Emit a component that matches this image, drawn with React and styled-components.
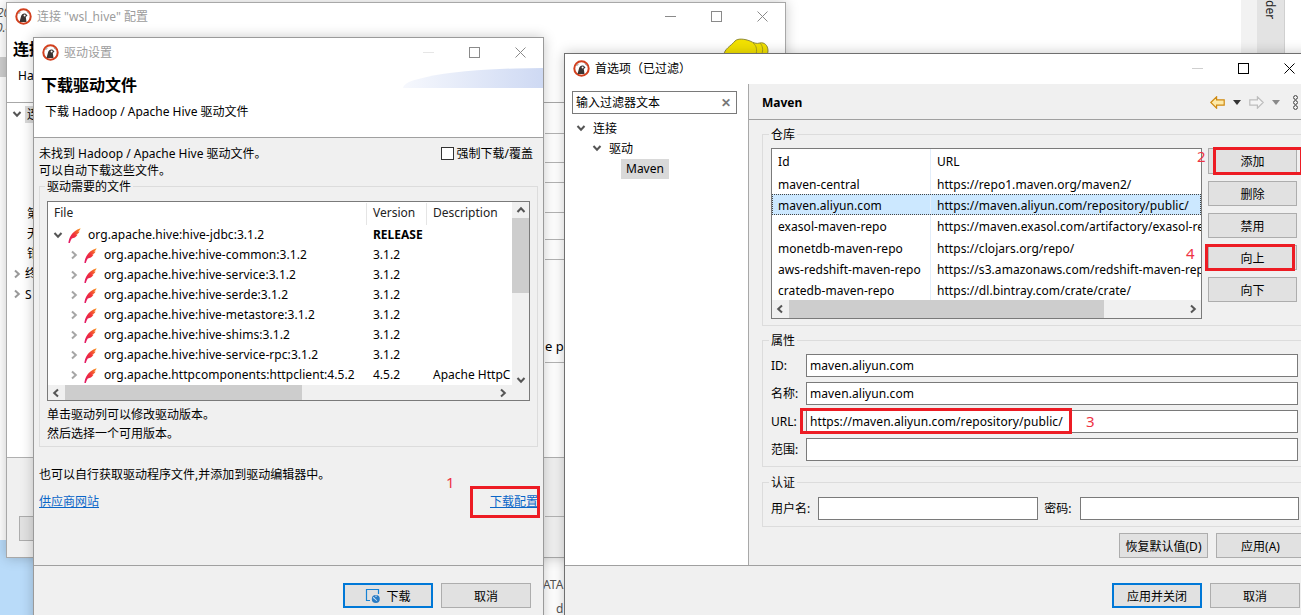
import React from "react";
import styled, { createGlobalStyle } from "styled-components";

const GlobalStyle = createGlobalStyle`
  html, body { margin: 0; padding: 0; background: #fff; overflow: hidden; }
  body { font: 12px/17px "Noto Sans", "Noto Sans CJK SC", sans-serif; color: #000; }
  * { box-sizing: border-box; }
`;

const CJK = `"Noto Sans", "Noto Sans CJK SC", sans-serif`;

/* ---------- drawings ---------- */
const Logo = () => (
  <svg width="17" height="17" viewBox="0 0 17 17">
    <circle cx="8.5" cy="8.5" r="7.2" fill="#fff" stroke="#d2401e" strokeWidth="2" />
    <path d="M4.5 14 L6 8.5 C6.5 6 9 5 11 6 L12.5 7.5 L10.8 9 L11.5 14 Z" fill="#3a3432" />
    <circle cx="9.6" cy="7.4" r="1" fill="#fff" />
    <path d="M3.5 6 L5.5 3.8 M12 3.5 L13.5 5.5" stroke="#8a8a8a" strokeWidth="1" />
  </svg>
);

const Feather = () => (
  <svg width="13" height="15" viewBox="0 0 13 15">
    <defs>
      <linearGradient id="fth" x1="0" y1="1" x2="1" y2="0">
        <stop offset="0" stopColor="#e0146a" />
        <stop offset="0.5" stopColor="#f0303c" />
        <stop offset="0.8" stopColor="#f56a2a" />
        <stop offset="1" stopColor="#f9a51f" />
      </linearGradient>
    </defs>
    <path
      d="M0.4 15 C1 10 3.2 3.2 12.6 0.2 C12.2 1.8 11.2 2.8 10 3.4 L11.6 3.4 C10.8 5.2 9.4 6 8 6.6 L9.6 6.8 C8 9.2 6 10.2 3.8 10.4 C2.8 11.8 2.2 13.2 1.8 15 Z"
      fill="url(#fth)"
    />
  </svg>
);

const WinGlyph = ({ kind, color }) => (
  <svg width="11" height="11" viewBox="0 0 11 11" fill="none" stroke={color} strokeWidth="1">
    {kind === "min" && <path d="M0 5.5H11" />}
    {kind === "max" && <rect x="0.5" y="0.5" width="10" height="10" />}
    {kind === "close" && <path d="M0.5 0.5L10.5 10.5M10.5 0.5L0.5 10.5" />}
  </svg>
);

const Chevron = ({ dir = "right", color = "#a6a6a6", size = 10 }) => {
  const d = {
    right: "M3 1.5L6.8 5L3 8.5",
    left: "M7 1.5L3.2 5L7 8.5",
    down: "M1.5 3L5 6.8L8.5 3",
    up: "M1.5 7L5 3.2L8.5 7",
  }[dir];
  return (
    <svg width={size} height={size} viewBox="0 0 10 10" fill="none" stroke={color} strokeWidth="2">
      <path d={d} />
    </svg>
  );
};

const GlobeMonitor = () => (
  <svg width="16" height="16" viewBox="0 0 16 16" fill="none">
    <path d="M5 12.5H1.5V1.5H13.5V6" stroke="#1682d4" strokeWidth="1.2" />
    <circle cx="10.8" cy="11" r="4" fill="#2b7cc4" />
    <path d="M8 9.5C10 10 10 12 12 12.5M11 7.5V9" stroke="#cfe6f8" strokeWidth="1.1" />
  </svg>
);

const NavArrow = ({ flip, fill, stroke }) => (
  <svg width="15" height="13" viewBox="0 0 15 13" style={flip ? { transform: "scaleX(-1)" } : undefined}>
    <path d="M0.8 6.5L6.6 0.8V3.8H14.2V9.2H6.6V12.2Z" fill={fill} stroke={stroke} strokeWidth="1.2" />
  </svg>
);

const Caret = styled.span`
  width: 0;
  height: 0;
  border-left: 4px solid transparent;
  border-right: 4px solid transparent;
  border-top: 5px solid ${(p) => p.$color};
`;

const Blob = () => (
  <svg width="46" height="20" viewBox="0 0 46 20">
    <path
      d="M1 17C1 11 8 8 12 3C15 0 22 1 27 3C31 5 33 6 37 5C41 4 45 7 45 13L44 20H2Z"
      fill="#f2e100"
      stroke="#8f8a3c"
      strokeWidth="1"
    />
    <path d="M30 5C34 8 34 12 33 17M37 5C40 8 40 12 39 16" stroke="#a8a020" fill="none" />
  </svg>
);

/* ---------- desktop ---------- */
const Desktop = styled.div`
  position: relative;
  width: 1301px;
  height: 615px;
  overflow: hidden;
  background: #fff;
`;

const BlueCorner = styled.div`
  position: absolute;
  left: 0;
  top: 540px;
  width: 34px;
  height: 75px;
  background: #b9dbf9;
`;

const GreyNub = styled.div`
  position: absolute;
  left: 0;
  top: 57px;
  width: 7px;
  height: 20px;
  background: #cfcfcf;
`;

const Scrap = styled.span`
  position: absolute;
  left: ${(p) => p.$x}px;
  top: ${(p) => p.$y}px;
  color: #555;
  font-style: ${(p) => (p.$italic ? "italic" : "normal")};
  white-space: nowrap;
`;

const SideTab = styled.div`
  position: absolute;
  left: 1241px;
  top: 0;
  width: 44px;
  height: 53px;
  display: flex;
  justify-content: flex-end;
  background: #f2f2f2;
`;

const SideTabInner = styled.div`
  width: 28px;
  background: #e3e3e3;
  border-right: 1px solid #d0d0d0;
  padding: 0 3px 0 0;
  writing-mode: vertical-rl;
  font-size: 12px;
  line-height: 22px;
  color: #222;
`;

const Window = styled.section`
  position: absolute;
  left: ${(p) => p.$x}px;
  top: ${(p) => p.$y}px;
  width: ${(p) => p.$w}px;
  height: ${(p) => p.$h}px;
  display: flex;
  flex-direction: column;
  background: #f0f0f0;
  border: 1px solid ${(p) => p.$edge || "#9a9a9a"};
  box-shadow: 0 0 12px rgba(0, 0, 0, 0.22);
`;

const TitleBar = styled.header`
  flex: none;
  height: ${(p) => p.$h}px;
  display: flex;
  align-items: center;
  padding: 0 0 ${(p) => p.$lift || 0}px 8px;
  background: #fff;
  color: ${(p) => (p.$dim ? "#9c9c9c" : "#000")};
  font-size: 12px;
`;

const TitleText = styled.span`
  margin-left: 5px;
  flex: 1;
  white-space: nowrap;
`;

const WinButton = styled.span`
  width: 46px;
  display: flex;
  justify-content: center;
`;

const Controls = ({ tone, minTone }) => (
  <>
    <WinButton><WinGlyph kind="min" color={minTone} /></WinButton>
    <WinButton><WinGlyph kind="max" color={tone} /></WinButton>
    <WinButton><WinGlyph kind="close" color={tone} /></WinButton>
  </>
);

/* ---------- back window ---------- */
const BackHead = styled.div`
  flex: none;
  height: 74px;
  display: flex;
  padding: 9px 16px 0 0;
  background: #fff;
  border-bottom: 1px solid #a8a8a8;
`;

const BackHeadText = styled.div`
  flex: 1;
  padding-left: 6px;
  margin-top: -3px;
`;

const BackHeading = styled.div`
  font-size: 16px;
  font-weight: 700;
  line-height: 28px;
`;

const BackSub = styled.div`
  padding: 4px 0 0 5px;
`;

const BackBody = styled.div`
  flex: 1;
  display: flex;
  background: #fff;
`;

const BackTree = styled.div`
  width: 538px;
  padding-top: 1px;
`;

const BackRow = styled.div`
  height: 20.2px;
  margin-bottom: ${(p) => p.$gap || 0}px;
  display: flex;
  align-items: center;
  padding-left: ${(p) => p.$pad}px;
  gap: 3px;
`;

const BackPick = styled.span`
  background: #d9d9d9;
  padding: 0 2px;
`;

const BackRight = styled.div`
  flex: 1;
  display: flex;
  flex-direction: column;
`;

const BackLine = styled.div`
  height: ${(p) => p.$h}px;
  border-bottom: 1px solid #b4b4b4;
  display: flex;
  align-items: flex-end;
  padding-bottom: 7px;
  font-size: 13px;
  white-space: nowrap;
`;

const BackFoot = styled.div`
  flex: none;
  height: 100px;
  display: flex;
  justify-content: space-between;
  background: #f0f0f0;
  border-top: 1px solid #b0b0b0;
  padding: 58px 0 0 12px;
`;

const BackButton = styled.div`
  width: 40px;
  height: 25px;
  background: #e1e1e1;
  border: 1px solid #adadad;
`;

const BackFootRule = styled.div`
  width: 240px;
  border-top: 1px solid #b4b4b4;
`;

/* ---------- driver window ---------- */
const Banner = styled.div`
  position: relative;
  flex: none;
  height: 72px;
  padding: 8px 0 0 7px;
  background: #fff;
  border-bottom: 1px solid #a0a0a0;
`;

const BannerSwoosh = styled.div`
  position: absolute;
  right: 0;
  top: 2px;
  width: 140px;
  height: 20px;
  background: linear-gradient(90deg, #f6f8fd 0%, #ced9f3 100%);
  clip-path: ellipse(100% 100% at 100% 100%);
`;

const BannerTitle = styled.div`
  font-size: 16px;
  font-weight: 700;
  line-height: 22px;
`;

const BannerSub = styled.div`
  padding: 7px 0 0 4px;
`;

const DriverBody = styled.div`
  flex: 1;
  padding: 7px 5px 0;
`;

const NoticeRow = styled.div`
  display: flex;
  justify-content: space-between;
  padding-right: 5px;
`;

const Check = styled.label`
  display: flex;
  align-items: center;
  gap: 3px;
`;

const CheckBox = styled.span`
  width: 13px;
  height: 13px;
  background: #fff;
  border: 1px solid #333;
`;

const Group = styled.fieldset`
  margin: ${(p) => p.$top || 0}px 0 0;
  padding: ${(p) => p.$padTop}px ${(p) => p.$padX || 8}px ${(p) => p.$padBottom}px;
  min-width: 0;
  height: ${(p) => (p.$h ? `${p.$h}px` : "auto")};
  border: 1px solid #dcdcdc;
`;

const Legend = styled.legend`
  margin-left: -2px;
  padding: 2px 2px 0;
  line-height: 16px;
`;

const TreeTable = styled.div`
  height: 200px;
  display: grid;
  grid-template-columns: 1fr 17px;
  grid-template-rows: 183px 15px;
  background: #fff;
  border: 1px solid #7a7a7a;
`;

const TreeMain = styled.div`
  overflow: hidden;
  padding-top: 1px;
`;

const TreeGrid = styled.div`
  display: grid;
  grid-template-columns: 319px 60px 86px;
  grid-auto-rows: 20px;
  line-height: 20px;
  &:first-child { grid-auto-rows: 22px; }
`;

const HeadCell = styled.div`
  padding-left: 6px;
  line-height: 20px;
  color: #222;
  border-right: ${(p) => (p.$last ? "none" : "1px solid #e5e5e5")};
`;

const NameCell = styled.div`
  display: flex;
  align-items: center;
  padding-left: ${(p) => 4 + p.$level * 16}px;
  white-space: nowrap;
  letter-spacing: 0.06px;
`;

const FeatherSlot = styled.span`
  display: flex;
  margin: 0 7px 0 4px;
`;

const ChevronSlot = styled.span`
  width: 12px;
  display: flex;
  justify-content: center;
`;

const ValueCell = styled.div`
  padding-left: 6px;
  white-space: nowrap;
  overflow: hidden;
  font-weight: ${(p) => (p.$bold ? 700 : 400)};
`;

const VBar = styled.div`
  display: flex;
  flex-direction: column;
  align-items: center;
  background: #f0f0f0;
  padding-top: 3px;
`;

const VThumb = styled.div`
  width: 100%;
  height: 75px;
  margin-top: 3px;
  background: #cdcdcd;
`;

const VTrack = styled.div`
  flex: 1;
`;

const HBar = styled.div`
  grid-column: 1 / span 2;
  flex: 1;
  display: flex;
  align-items: center;
  padding: 0 ${(p) => p.$pad || 21}px 0 3px;
  background: #f0f0f0;
`;

const HThumb = styled.div`
  width: ${(p) => p.$w}px;
  height: 100%;
  margin-left: ${(p) => p.$gap}px;
  background: #cdcdcd;
`;

const HTrack = styled.div`
  flex: 1;
`;

const Hints = styled.div`
  padding: 4px 0 0;
  line-height: 19px;
`;

const Help = styled.div`
  margin-top: 19px;
`;

const LinkRow = styled.div`
  display: flex;
  justify-content: space-between;
  margin-top: 10px;
`;

const Link = styled.a`
  color: #0a66c8;
  text-decoration: underline;
`;

const Footer = styled.footer`
  flex: none;
  height: ${(p) => p.$h}px;
  display: flex;
  justify-content: flex-end;
  gap: 8px;
  padding: ${(p) => p.$top}px ${(p) => p.$right}px 0 0;
  background: #f0f0f0;
  border-top: 1px solid #a0a0a0;
`;

const Button = styled.button`
  flex: none;
  width: ${(p) => p.$w || 90}px;
  height: ${(p) => p.$h || 25}px;
  padding: 0;
  display: flex;
  align-items: center;
  justify-content: center;
  gap: 5px;
  font: 12px ${CJK};
  color: #000;
  background: #e1e1e1;
  border: ${(p) => (p.$primary ? "2px solid #0078d7" : "1px solid #adadad")};
`;

/* ---------- preferences window ---------- */
const PrefsColumns = styled.div`
  flex: 1;
  display: grid;
  grid-template-columns: 184px 1fr;
  min-height: 0;
`;

const PrefsSide = styled.nav`
  padding: 7px 11px 0 7px;
  background: #fff;
  border-right: 1px solid #a8a8a8;
`;

const FilterBox = styled.div`
  height: 23px;
  display: flex;
  align-items: center;
  justify-content: space-between;
  padding: 0 5px 0 3px;
  background: #fff;
  border: 1px solid #7a7a7a;
`;

const ClearMark = styled.span`
  font-size: 12px;
  font-weight: 700;
  color: #777;
`;

const SideTree = styled.div`
  padding-top: 4px;
`;

const SideRow = styled.div`
  height: 20px;
  display: flex;
  align-items: center;
  gap: 7px;
  padding-left: ${(p) => 4 + p.$level * 16}px;
`;

const SidePick = styled.span`
  margin: 1px 0 0 13px;
  padding: 0 5px;
  line-height: 20px;
  background: #d9d9d9;
`;

const PrefsMain = styled.main`
  min-width: 0;
  display: flex;
  flex-direction: column;
`;

const PageHead = styled.div`
  flex: none;
  height: 36px;
  display: flex;
  align-items: center;
  padding: 2px 0 0 13px;
  border-bottom: 1px solid #a0a0a0;
`;

const PageTitle = styled.h2`
  flex: 1;
  margin: 0;
  font-size: 12px;
  font-weight: 700;
`;

const PageTools = styled.div`
  display: flex;
  align-items: center;
  gap: 8px;
  padding-right: 14px;
`;

const Dots = styled.span`
  width: 5px;
  height: 15px;
  margin-left: 5px;
  background: radial-gradient(circle at center, transparent 1.2px, #777 1.3px, #777 2.2px, transparent 2.4px) 0 0 / 5px 5px;
`;

const PageBody = styled.div`
  flex: 1;
  padding: 5px 0 0 13px;
  margin-right: -10px;
  overflow: hidden;
`;

const RepoRow = styled.div`
  display: flex;
  gap: 6px;
`;

const RepoTable = styled.div`
  flex: none;
  width: 431px;
  height: 171px;
  display: flex;
  flex-direction: column;
  background: #fff;
  border: 1px solid #7a7a7a;
`;

const RepoRowLine = styled.div`
  height: ${(p) => p.$h || 21.2}px;
  flex: none;
  display: grid;
  grid-template-columns: 159px 1fr;
  line-height: ${(p) => (p.$h || 21) + 2}px;
  white-space: nowrap;
  background: ${(p) => (p.$picked ? "#cce8ff" : "transparent")};
  outline: ${(p) => (p.$picked ? "1px dotted #444" : "none")};
  outline-offset: -1px;
`;

const RepoCell = styled.div`
  height: 100%;
  padding-left: 6px;
  overflow: hidden;
  letter-spacing: 0.06px;
  border-right: ${(p) => (p.$first ? "1px solid #e3eefa" : "none")};
`;

const RepoActions = styled.div`
  display: flex;
  flex-direction: column;
  gap: 7px;
`;

const FormGrid = styled.div`
  display: grid;
  grid-template-columns: 35px 492px;
  grid-auto-rows: 23px;
  row-gap: 5px;
  align-items: center;
`;

const Field = styled.div`
  height: 23px;
  width: ${(p) => (p.$w ? `${p.$w}px` : "auto")};
  padding-left: 3px;
  line-height: 21px;
  letter-spacing: 0.08px;
  background: #fff;
  border: 1px solid #7a7a7a;
`;

const AuthRow = styled.div`
  display: flex;
  align-items: center;
`;

const AuthLabel = styled.span`
  width: ${(p) => p.$w}px;
  flex: none;
`;

const ActionRow = styled.div`
  display: flex;
  gap: 8px;
  margin: 6px 0 0 357px;
`;

/* ---------- red marks drawn over the screenshot ---------- */
const RedBox = styled.div`
  position: absolute;
  left: ${(p) => p.$x}px;
  top: ${(p) => p.$y}px;
  width: ${(p) => p.$w}px;
  height: ${(p) => p.$h}px;
  border: 3px solid #ed1c24;
`;

const RedNum = styled.span`
  position: absolute;
  left: ${(p) => p.$x}px;
  top: ${(p) => p.$y}px;
  color: #ee3344;
  font-size: 15px;
  line-height: 18px;
`;

const driverRows = [
  ["org.apache.hive:hive-common:3.1.2", "3.1.2"],
  ["org.apache.hive:hive-service:3.1.2", "3.1.2"],
  ["org.apache.hive:hive-serde:3.1.2", "3.1.2"],
  ["org.apache.hive:hive-metastore:3.1.2", "3.1.2"],
  ["org.apache.hive:hive-shims:3.1.2", "3.1.2"],
  ["org.apache.hive:hive-service-rpc:3.1.2", "3.1.2"],
  ["org.apache.httpcomponents:httpclient:4.5.2", "4.5.2", "Apache HttpC"],
];

const repos = [
  ["maven-central", "https://repo1.maven.org/maven2/"],
  ["maven.aliyun.com", "https://maven.aliyun.com/repository/public/", true],
  ["exasol-maven-repo", "https://maven.exasol.com/artifactory/exasol-releases/"],
  ["monetdb-maven-repo", "https://clojars.org/repo/"],
  ["aws-redshift-maven-repo", "https://s3.amazonaws.com/redshift-maven-repository/"],
  ["cratedb-maven-repo", "https://dl.bintray.com/crate/crate/"],
];

const BackWindow = () => (
  <Window $x={6} $y={2} $w={780} $h={556} $edge="#a8a8a8">
    <TitleBar $h={26} $dim>
      <Logo />
      <TitleText>连接 "wsl_hive" 配置</TitleText>
      <Controls tone="#8a8a8a" minTone="#8a8a8a" />
    </TitleBar>
    <BackHead>
      <BackHeadText>
        <BackHeading>连接</BackHeading>
        <BackSub>Ha</BackSub>
      </BackHeadText>
      <Blob />
    </BackHead>
    <BackBody>
      <BackTree>
        <BackRow $pad={5} $gap={79}>
          <Chevron dir="down" color="#555" />
          <BackPick>连</BackPick>
        </BackRow>
        <BackRow $pad={20}>第</BackRow>
        <BackRow $pad={20}>无</BackRow>
        <BackRow $pad={20}>钳</BackRow>
        <BackRow $pad={5}><Chevron color="#999" />终</BackRow>
        <BackRow $pad={5}><Chevron color="#999" />S</BackRow>
      </BackTree>
      <BackRight>
        <BackLine $h={31} />
        <BackLine $h={29} />
        <BackLine $h={20} />
        <BackLine $h={30} />
        <BackLine $h={27} />
        <BackLine $h={20} />
        <BackLine $h={103}>e pa</BackLine>
      </BackRight>
    </BackBody>
    <BackFoot>
      <BackButton />
      <BackFootRule />
    </BackFoot>
  </Window>
);

const DriverWindow = () => (
  <Window $x={33} $y={37} $w={511} $h={590}>
    <TitleBar $h={28} $dim>
      <Logo />
      <TitleText>驱动设置</TitleText>
      <Controls tone="#8a8a8a" minTone="#e6e6e6" />
    </TitleBar>
    <Banner>
      <BannerSwoosh />
      <BannerTitle>下载驱动文件</BannerTitle>
      <BannerSub>下载 Hadoop / Apache Hive 驱动文件</BannerSub>
    </Banner>
    <DriverBody>
      <NoticeRow>
        <span>未找到 Hadoop / Apache Hive 驱动文件。</span>
        <Check><CheckBox />强制下载/覆盖</Check>
      </NoticeRow>
      <div>可以自动下载这些文件。</div>
      <Group $top={-2} $padTop={6} $padBottom={0} $padX={7} $h={270}>
        <Legend>驱动需要的文件</Legend>
        <TreeTable>
          <TreeMain>
            <TreeGrid>
              <HeadCell>File</HeadCell>
              <HeadCell>Version</HeadCell>
              <HeadCell $last>Description</HeadCell>
            </TreeGrid>
            <TreeGrid>
              <NameCell $level={0}>
                <ChevronSlot><Chevron dir="down" color="#555" /></ChevronSlot>
                <FeatherSlot><Feather /></FeatherSlot>
                org.apache.hive:hive-jdbc:3.1.2
              </NameCell>
              <ValueCell $bold>RELEASE</ValueCell>
              <ValueCell />
              {driverRows.map(([name, ver, desc]) => (
                <React.Fragment key={name}>
                  <NameCell $level={1}>
                    <ChevronSlot><Chevron /></ChevronSlot>
                    <FeatherSlot><Feather /></FeatherSlot>
                    {name}
                  </NameCell>
                  <ValueCell>{ver}</ValueCell>
                  <ValueCell>{desc}</ValueCell>
                </React.Fragment>
              ))}
            </TreeGrid>
          </TreeMain>
          <VBar>
            <Chevron dir="up" color="#555" />
            <VThumb />
            <VTrack />
            <Chevron dir="down" color="#555" />
          </VBar>
          <HBar>
            <Chevron dir="left" color="#555" />
            <HThumb $w={237} $gap={4} />
            <HTrack />
            <Chevron dir="right" color="#555" />
          </HBar>
        </TreeTable>
        <Hints>
          单击驱动列可以修改驱动版本。
          <br />
          然后选择一个可用版本。
        </Hints>
      </Group>
      <Help>也可以自行获取驱动程序文件,并添加到驱动编辑器中。</Help>
      <LinkRow>
        <Link>供应商网站</Link>
        <Link>下载配置</Link>
      </LinkRow>
    </DriverBody>
    <Footer $h={61} $top={17} $right={12}>
      <Button $primary><GlobeMonitor />下载</Button>
      <Button>取消</Button>
    </Footer>
  </Window>
);

const PrefsWindow = () => (
  <Window $x={564} $y={53} $w={749} $h={570} $edge="#6f6f6f">
    <TitleBar $h={30} $lift={2}>
      <Logo />
      <TitleText>首选项（已过滤）</TitleText>
      <Controls tone="#000" minTone="#cfcfcf" />
    </TitleBar>
    <PrefsColumns>
      <PrefsSide>
        <FilterBox>
          输入过滤器文本
          <ClearMark>✕</ClearMark>
        </FilterBox>
        <SideTree>
          <SideRow $level={0}><Chevron dir="down" color="#555" />连接</SideRow>
          <SideRow $level={1}><Chevron dir="down" color="#555" />驱动</SideRow>
          <SideRow $level={2}><SidePick>Maven</SidePick></SideRow>
        </SideTree>
      </PrefsSide>
      <PrefsMain>
        <PageHead>
          <PageTitle>Maven</PageTitle>
          <PageTools>
            <NavArrow fill="#fde9a8" stroke="#cf8a12" />
            <Caret $color="#333" />
            <NavArrow flip fill="#f4f4f4" stroke="#bdbdbd" />
            <Caret $color="#8a8a8a" />
            <Dots />
          </PageTools>
        </PageHead>
        <PageBody>
          <Group $padTop={5} $padBottom={0} $h={201}>
            <Legend>仓库</Legend>
            <RepoRow>
              <RepoTable>
                <RepoRowLine $h={24}>
                  <RepoCell $first>Id</RepoCell>
                  <RepoCell>URL</RepoCell>
                </RepoRowLine>
                {repos.map(([id, url, picked]) => (
                  <RepoRowLine key={id} $picked={picked}>
                    <RepoCell $first>{id}</RepoCell>
                    <RepoCell>{url}</RepoCell>
                  </RepoRowLine>
                ))}
                <HBar $pad={3}>
                  <Chevron dir="left" color="#555" />
                  <HThumb $w={315} $gap={4} />
                  <HTrack />
                  <Chevron dir="right" color="#555" />
                </HBar>
              </RepoTable>
              <RepoActions>
                <Button $w={89} $h={26}>添加</Button>
                <Button $w={89}>删除</Button>
                <Button $w={89}>禁用</Button>
                <Button $w={89}>向上</Button>
                <Button $w={89}>向下</Button>
              </RepoActions>
            </RepoRow>
          </Group>
          <Group $top={5} $padTop={5} $padBottom={5}>
            <Legend>属性</Legend>
            <FormGrid>
              <span>ID:</span>
              <Field>maven.aliyun.com</Field>
              <span>名称:</span>
              <Field>maven.aliyun.com</Field>
              <span>URL:</span>
              <Field>https://maven.aliyun.com/repository/public/</Field>
              <span>范围:</span>
              <Field />
            </FormGrid>
          </Group>
          <Group $top={6} $padTop={6} $padBottom={6}>
            <Legend>认证</Legend>
            <AuthRow>
              <AuthLabel $w={47}>用户名:</AuthLabel>
              <Field $w={220} />
              <AuthLabel $w={42}>&nbsp;&nbsp;密码:</AuthLabel>
              <Field $w={219} />
            </AuthRow>
          </Group>
          <ActionRow>
            <Button $w={89}>恢复默认值(D)</Button>
            <Button $w={89}>应用(A)</Button>
          </ActionRow>
        </PageBody>
      </PrefsMain>
    </PrefsColumns>
    <Footer $h={57} $top={17} $right={12}>
      <Button $primary $w={90}>应用并关闭</Button>
      <Button $w={90}>取消</Button>
    </Footer>
  </Window>
);

export default function App() {
  return (
    <>
      <GlobalStyle />
      <Desktop>
        <BlueCorner />
        <GreyNub />
        <Scrap $x={-3} $y={4} $italic>20</Scrap>
        <Scrap $x={-4} $y={19} $italic>0.4</Scrap>
        <SideTab>
          <SideTabInner>der</SideTabInner>
        </SideTab>
        <Scrap $x={543} $y={576}>ATA</Scrap>
        <Scrap $x={556} $y={600}>d</Scrap>
        <BackWindow />
        <DriverWindow />
        <PrefsWindow />
        <RedBox $x={470} $y={486} $w={70} $h={32} />
        <RedBox $x={1213} $y={147} $w={90} $h={28} />
        <RedBox $x={800} $y={408} $w={272} $h={26} />
        <RedBox $x={1205} $y={244} $w={90} $h={27} />
        <RedNum $x={446} $y={473}>1</RedNum>
        <RedNum $x={1197} $y={147}>2</RedNum>
        <RedNum $x={1086} $y={412}>3</RedNum>
        <RedNum $x={1186} $y={244}>4</RedNum>
      </Desktop>
    </>
  );
}
